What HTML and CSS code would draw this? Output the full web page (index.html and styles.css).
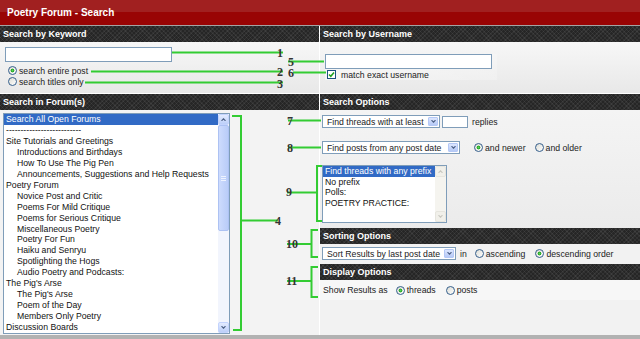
FILE: index.html
```
<!DOCTYPE html>
<html>
<head>
  <meta charset="utf-8">
  <title>Poetry Forum - Search</title>
  <link rel="stylesheet" href="styles.css">
</head>
<body>
  <div class="page">
    <div class="topbar">Poetry Forum - Search</div>

    <div class="grid">
      <div class="cell">
        <h2 class="bar">Search by Keyword</h2>
        <div class="pane kw-pane">
          <span class="field"></span>
          <div class="opt first"><span class="radio on"></span>search entire post</div>
          <div class="opt"><span class="radio"></span>search titles only</div>
        </div>
      </div>

      <div class="cell">
        <h2 class="bar">Search by Username</h2>
        <div class="pane user-pane">
          <div class="userbox">
            <span class="field"></span>
            <div class="opt check-row">
              <span class="check"><svg width="7" height="7" viewBox="0 0 7 7"><path d="M1 3.5L2.8 5.3L6 1.5" fill="none" stroke="#21a121" stroke-width="1.6"/></svg></span>
              match exact username
            </div>
          </div>
        </div>
      </div>

      <div class="cell">
        <h2 class="bar">Search in Forum(s)</h2>
        <div class="pane forums">
          <div class="lb lb-forums">
            <div class="lb-items">
              <div class="sel-item">Search All Open Forums</div>
              <div>--------------------------</div>
              <div>Site Tutorials and Greetings</div>
              <div class="sub">Introductions and Birthdays</div>
              <div class="sub">How To Use The Pig Pen</div>
              <div class="sub">Announcements, Suggestions and Help Requests</div>
              <div>Poetry Forum</div>
              <div class="sub">Novice Post and Critic</div>
              <div class="sub">Poems For Mild Critique</div>
              <div class="sub">Poems for Serious Critique</div>
              <div class="sub">Miscellaneous Poetry</div>
              <div class="sub">Poetry For Fun</div>
              <div class="sub">Haiku and Senryu</div>
              <div class="sub">Spotlighting the Hogs</div>
              <div class="sub">Audio Poetry and Podcasts:</div>
              <div>The Pig's Arse</div>
              <div class="sub">The Pig's Arse</div>
              <div class="sub">Poem of the Day</div>
              <div class="sub">Members Only Poetry</div>
              <div>Discussion Boards</div>
            </div>
            <div class="sb">
              <span class="sb-btn"><svg width="5" height="3" viewBox="0 0 5 3"><path d="M0.5 2.8L2.5 0.8L4.5 2.8" fill="none" stroke="#4d6185" stroke-width="1.2"/></svg></span>
              <span class="sb-thumb"><svg width="5" height="5" viewBox="0 0 5 5"><path d="M0 0.5H5M0 2.5H5M0 4.5H5" stroke="#eef3ff" stroke-width="1"/></svg></span>
              <span class="sb-track"></span>
              <span class="sb-btn"><svg width="5" height="3" viewBox="0 0 5 3"><path d="M0.5 0.2L2.5 2.2L4.5 0.2" fill="none" stroke="#4d6185" stroke-width="1.2"/></svg></span>
            </div>
          </div>
        </div>
      </div>

      <div class="cell">
        <h2 class="bar">Search Options</h2>
        <div class="pane opts">
          <div class="row">
            <span class="select sel-threads"><span class="select-text">Find threads with at least</span><span class="dd"><svg width="5" height="3" viewBox="0 0 5 3"><path d="M0.5 0.2L2.5 2.2L4.5 0.2" fill="none" stroke="#4d6185" stroke-width="1.2"/></svg></span></span>
            <span class="num"></span>
            <span class="word">replies</span>
          </div>
          <div class="row row-date">
            <span class="select sel-date"><span class="select-text">Find posts from any post date</span><span class="dd"><svg width="5" height="3" viewBox="0 0 5 3"><path d="M0.5 0.2L2.5 2.2L4.5 0.2" fill="none" stroke="#4d6185" stroke-width="1.2"/></svg></span></span>
            <span class="opt inline newer"><span class="radio on"></span>and newer</span>
            <span class="opt inline older"><span class="radio"></span>and older</span>
          </div>
          <div class="lb lb-prefix">
            <div class="lb-items">
              <div class="sel-item">Find threads with any prefix</div>
              <div>No prefix</div>
              <div>Polls:</div>
              <div>POETRY PRACTICE:</div>
            </div>
            <div class="sb off">
              <span class="sb-btn"><svg width="5" height="3" viewBox="0 0 5 3"><path d="M0.5 2.8L2.5 0.8L4.5 2.8" fill="none" stroke="#c9c8c0" stroke-width="1.2"/></svg></span>
              <span class="sb-track"></span>
              <span class="sb-btn"><svg width="5" height="3" viewBox="0 0 5 3"><path d="M0.5 0.2L2.5 2.2L4.5 0.2" fill="none" stroke="#c9c8c0" stroke-width="1.2"/></svg></span>
            </div>
          </div>
        </div>

        <h2 class="bar">Sorting Options</h2>
        <div class="pane sort-pane">
          <div class="row">
            <span class="select sel-sort"><span class="select-text">Sort Results by last post date</span><span class="dd"><svg width="5" height="3" viewBox="0 0 5 3"><path d="M0.5 0.2L2.5 2.2L4.5 0.2" fill="none" stroke="#4d6185" stroke-width="1.2"/></svg></span></span>
            <span class="word in">in</span>
            <span class="opt inline asc"><span class="radio"></span>ascending</span>
            <span class="opt inline desc"><span class="radio on"></span>descending order</span>
          </div>
        </div>

        <h2 class="bar">Display Options</h2>
        <div class="pane show-pane">
          <span class="word">Show Results as</span>
          <span class="opt inline threads"><span class="radio on"></span>threads</span>
          <span class="opt inline posts"><span class="radio"></span>posts</span>
        </div>
        <div class="pane rest"></div>
      </div>
    </div>

    <div class="foot"></div>

    <svg class="notes" width="640" height="339" viewBox="0 0 640 339">
      <g stroke="#33cc33" stroke-width="2" fill="none">
        <path d="M172 52.5H283"/>
        <path d="M91 71.5H283"/>
        <path d="M85 82.5H283"/>
        <path d="M288 61.5H324"/>
        <path d="M293 72.5H326"/>
        <path d="M232 116H241V330H233"/>
        <path d="M241 220.5H278"/>
        <path d="M288 120.5H321"/>
        <path d="M288 147.5H321"/>
        <path d="M322 166H317V221H322"/>
        <path d="M287 192.5H317"/>
        <path d="M318 230H311.5V257H318"/>
        <path d="M287 244H311"/>
        <path d="M318 267H311.5V297H318"/>
        <path d="M287 281H311"/>
      </g>
      <g class="num-labels">
        <text x="277" y="57">1</text>
        <text x="277" y="76">2</text>
        <text x="277" y="88">3</text>
        <text x="288" y="66">5</text>
        <text x="288" y="77">6</text>
        <text x="275" y="225">4</text>
        <text x="287" y="125">7</text>
        <text x="287" y="152">8</text>
        <text x="286" y="196">9</text>
        <text x="286" y="248">10</text>
        <text x="286" y="285">11</text>
      </g>
    </svg>
  </div>
</body>
</html>
```

FILE: styles.css
```
    body {
      margin: 0;
      font-family: "Liberation Sans", Arial, sans-serif;
      font-size: 8.7px;
      color: #222;
      background: #f3f3f3;
    }

    .page {
      position: relative;
      width: 640px;
      height: 339px;
      overflow: hidden;
    }

    .topbar {
      height: 25px;
      line-height: 25px;
      padding-left: 7px;
      border-bottom: 1px solid #a4a4a4;
      background: linear-gradient(#a12020 0, #a12020 50%, #990404 50%, #990404 100%);
      color: #fff;
      font-size: 10px;
      font-weight: bold;
    }

    .grid {
      display: grid;
      grid-template-columns: 319px 320px;
      grid-template-rows: 67px 241px;
      gap: 1px;
      background: #fff;
    }

    .cell {
      display: flex;
      flex-direction: column;
      background: #f3f3f3;
      min-height: 0;
    }

    .bar {
      margin: 0;
      height: 16px;
      line-height: 16px;
      padding-left: 3px;
      font-size: 9px;
      font-weight: bold;
      color: #fff;
      background-color: #262626;
      background-image:
        repeating-linear-gradient(45deg, rgba(255,255,255,.06) 0 1px, transparent 1px 3px),
        repeating-linear-gradient(-45deg, rgba(255,255,255,.06) 0 1px, transparent 1px 3px);
    }

    .pane {
      flex: 1;
      box-sizing: border-box;
    }

    .kw-pane,
    .user-pane {
      background: linear-gradient(#f7f7f7, #e8e8e8);
    }

    .kw-pane {
      padding: 5px 0 0 5px;
    }

    .user-pane {
      padding: 12px 0 0 5px;
    }

    .field {
      display: block;
      width: 167px;
      height: 15px;
      box-sizing: border-box;
      border: 1px solid #7f9db9;
      background: #fff;
    }

    .userbox {
      width: 172px;
      height: 26px;
      background: linear-gradient(90deg, rgba(255,255,255,.45), rgba(255,255,255,.2));
    }

    .opt {
      display: flex;
      align-items: center;
      height: 11px;
      white-space: nowrap;
    }

    .opt.first {
      margin-top: 3px;
    }

    .opt.inline {
      display: inline-flex;
    }

    .radio {
      width: 9px;
      height: 9px;
      box-sizing: border-box;
      border: 1px solid #355f8c;
      border-radius: 50%;
      background: linear-gradient(135deg, #dcdcd4, #fff);
      margin: 0 2px 0 3px;
      flex: none;
    }

    .radio.on {
      background:
        radial-gradient(circle, #5ad85a 0, #22a322 1.6px, transparent 2.2px),
        linear-gradient(135deg, #dcdcd4, #fff);
    }

    .check {
      width: 9px;
      height: 9px;
      box-sizing: border-box;
      border: 1px solid #1c5180;
      background: #fff;
      margin: 0 5px 0 2px;
      display: flex;
      align-items: center;
      justify-content: center;
      flex: none;
    }

    /* forum list */
    .forums {
      padding: 3px 0 0 3px;
    }

    .lb {
      display: flex;
      box-sizing: border-box;
      border: 1px solid #7f9db9;
      background: #fff;
    }

    .lb-forums {
      width: 227px;
      height: 221px;
    }

    .lb-items {
      flex: 1;
      overflow: hidden;
      color: #111;
    }

    .lb-items div {
      line-height: 10.95px;
      padding-left: 2px;
      white-space: nowrap;
    }

    .lb-items .sub {
      padding-left: 13px;
    }

    .lb-items .sel-item {
      background: #316ac5;
      color: #fff;
    }

    .sb {
      width: 11px;
      display: flex;
      flex-direction: column;
      background: #f2f5fd;
      flex: none;
    }

    .sb-btn {
      height: 11px;
      box-sizing: border-box;
      border: 1px solid #c3d3fd;
      border-radius: 2px;
      background: linear-gradient(#e3ebff, #bccff9);
      display: flex;
      align-items: center;
      justify-content: center;
      flex: none;
    }

    .sb-thumb {
      height: 106px;
      box-sizing: border-box;
      border: 1px solid #adc2f3;
      border-radius: 2px;
      background: linear-gradient(90deg, #cddbfd, #b9ccf8);
      display: flex;
      align-items: center;
      justify-content: center;
      flex: none;
    }

    .sb-track {
      flex: 1;
    }

    .sb.off {
      background: #f5f4ef;
    }

    .sb.off .sb-btn {
      border-color: #e6e5de;
      background: #f1f0ea;
    }

    /* search options */
    .opts {
      flex: none;
      height: 118px;
      padding: 5px 0 0 2px;
      background: linear-gradient(#f4f4f4, #ebebeb);
    }

    .row {
      display: flex;
      align-items: center;
      height: 13px;
      white-space: nowrap;
    }

    .row-date {
      margin-top: 13px;
    }

    .select {
      display: inline-flex;
      align-items: center;
      height: 13px;
      box-sizing: border-box;
      border: 1px solid #7f9db9;
      background: #fff;
      padding: 0 1px 0 4px;
    }

    .select-text {
      flex: 1;
      overflow: hidden;
    }

    .dd {
      width: 10px;
      height: 9px;
      box-sizing: border-box;
      border: 1px solid #b4c8f6;
      border-radius: 1px;
      background: linear-gradient(#dce6fe, #b6c9f6);
      display: flex;
      align-items: center;
      justify-content: center;
    }

    .sel-threads {
      width: 118px;
    }

    .sel-date {
      width: 138px;
    }

    .sel-sort {
      width: 134px;
    }

    .num {
      width: 26px;
      height: 12px;
      box-sizing: border-box;
      border: 1px solid #7f9db9;
      background: #fff;
      margin-left: 2px;
    }

    .num + .word {
      margin-left: 4px;
    }

    .newer {
      margin-left: 11px;
    }

    .older {
      margin-left: 6px;
    }

    .lb-prefix {
      width: 125px;
      height: 58px;
      margin-top: 11px;
    }

    .lb-prefix .lb-items div {
      line-height: 10.7px;
    }

    /* sorting / display */
    .sort-pane {
      flex: none;
      height: 20px;
      padding: 3px 0 0 2px;
      background: #f2f2f2;
    }

    .in {
      margin-left: 4px;
    }

    .asc {
      margin-left: 5px;
    }

    .desc {
      margin-left: 7px;
    }

    .show-pane {
      flex: none;
      height: 20px;
      display: flex;
      align-items: center;
      padding-left: 3px;
      white-space: nowrap;
      background: #f7f7f7;
    }

    .threads {
      margin-left: 5px;
    }

    .posts {
      margin-left: 7px;
    }

    .rest {
      background: #f2f2f2;
    }

    .foot {
      height: 4px;
      background: #b2b2b2;
    }

    .notes {
      position: absolute;
      top: 0;
      left: 0;
    }

    .num-labels {
      font-family: "Liberation Serif", "Times New Roman", serif;
      font-weight: bold;
      font-size: 12px;
      fill: #333;
    }
```
